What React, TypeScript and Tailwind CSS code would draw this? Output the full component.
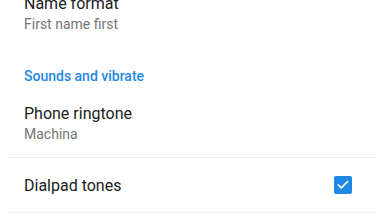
import { Check } from "lucide-react";

interface SettingRowProps {
  title: string;
  summary?: string;
  className?: string;
}

function SettingRow({ title, summary, className = "" }: SettingRowProps) {
  return (
    <div className={`px-6 ${className}`}>
      <div className="text-[16px] leading-[20px] text-[#212121]">{title}</div>
      {summary && <div className="text-[14px] leading-[20px] text-[#757575]">{summary}</div>}
    </div>
  );
}

export default function App() {
  return (
    <div
      className="w-[384px] h-[216px] overflow-hidden bg-white"
      style={{ fontFamily: "Roboto, 'Noto Sans', sans-serif" }}
    >
      <div className="-mt-[6px]">
        {/* Display options */}
        <SettingRow title="Name format" summary="First name first" />

        {/* Section header */}
        <div className="px-6 pt-8 text-[14px] leading-[20px] font-medium text-[#1e88e5]">
          Sounds and vibrate
        </div>

        <SettingRow title="Phone ringtone" summary="Machina" className="pt-[18px] pb-[13px]" />
        <div className="mx-2 border-b border-[#eeeeee]" />

        {/* Toggle row */}
        <div className="flex items-center justify-between pl-6 pr-8 pt-[18px] pb-4">
          <div className="text-[16px] leading-[20px] text-[#212121]">Dialpad tones</div>
          <div className="w-[18px] h-[18px] rounded-[2px] bg-[#1e88e5] flex items-center justify-center -mt-[2px]">
            <Check className="w-[14px] h-[14px] text-white" strokeWidth={3} />
          </div>
        </div>
        <div className="mx-2 border-b border-[#eeeeee]" />
      </div>
    </div>
  );
}
